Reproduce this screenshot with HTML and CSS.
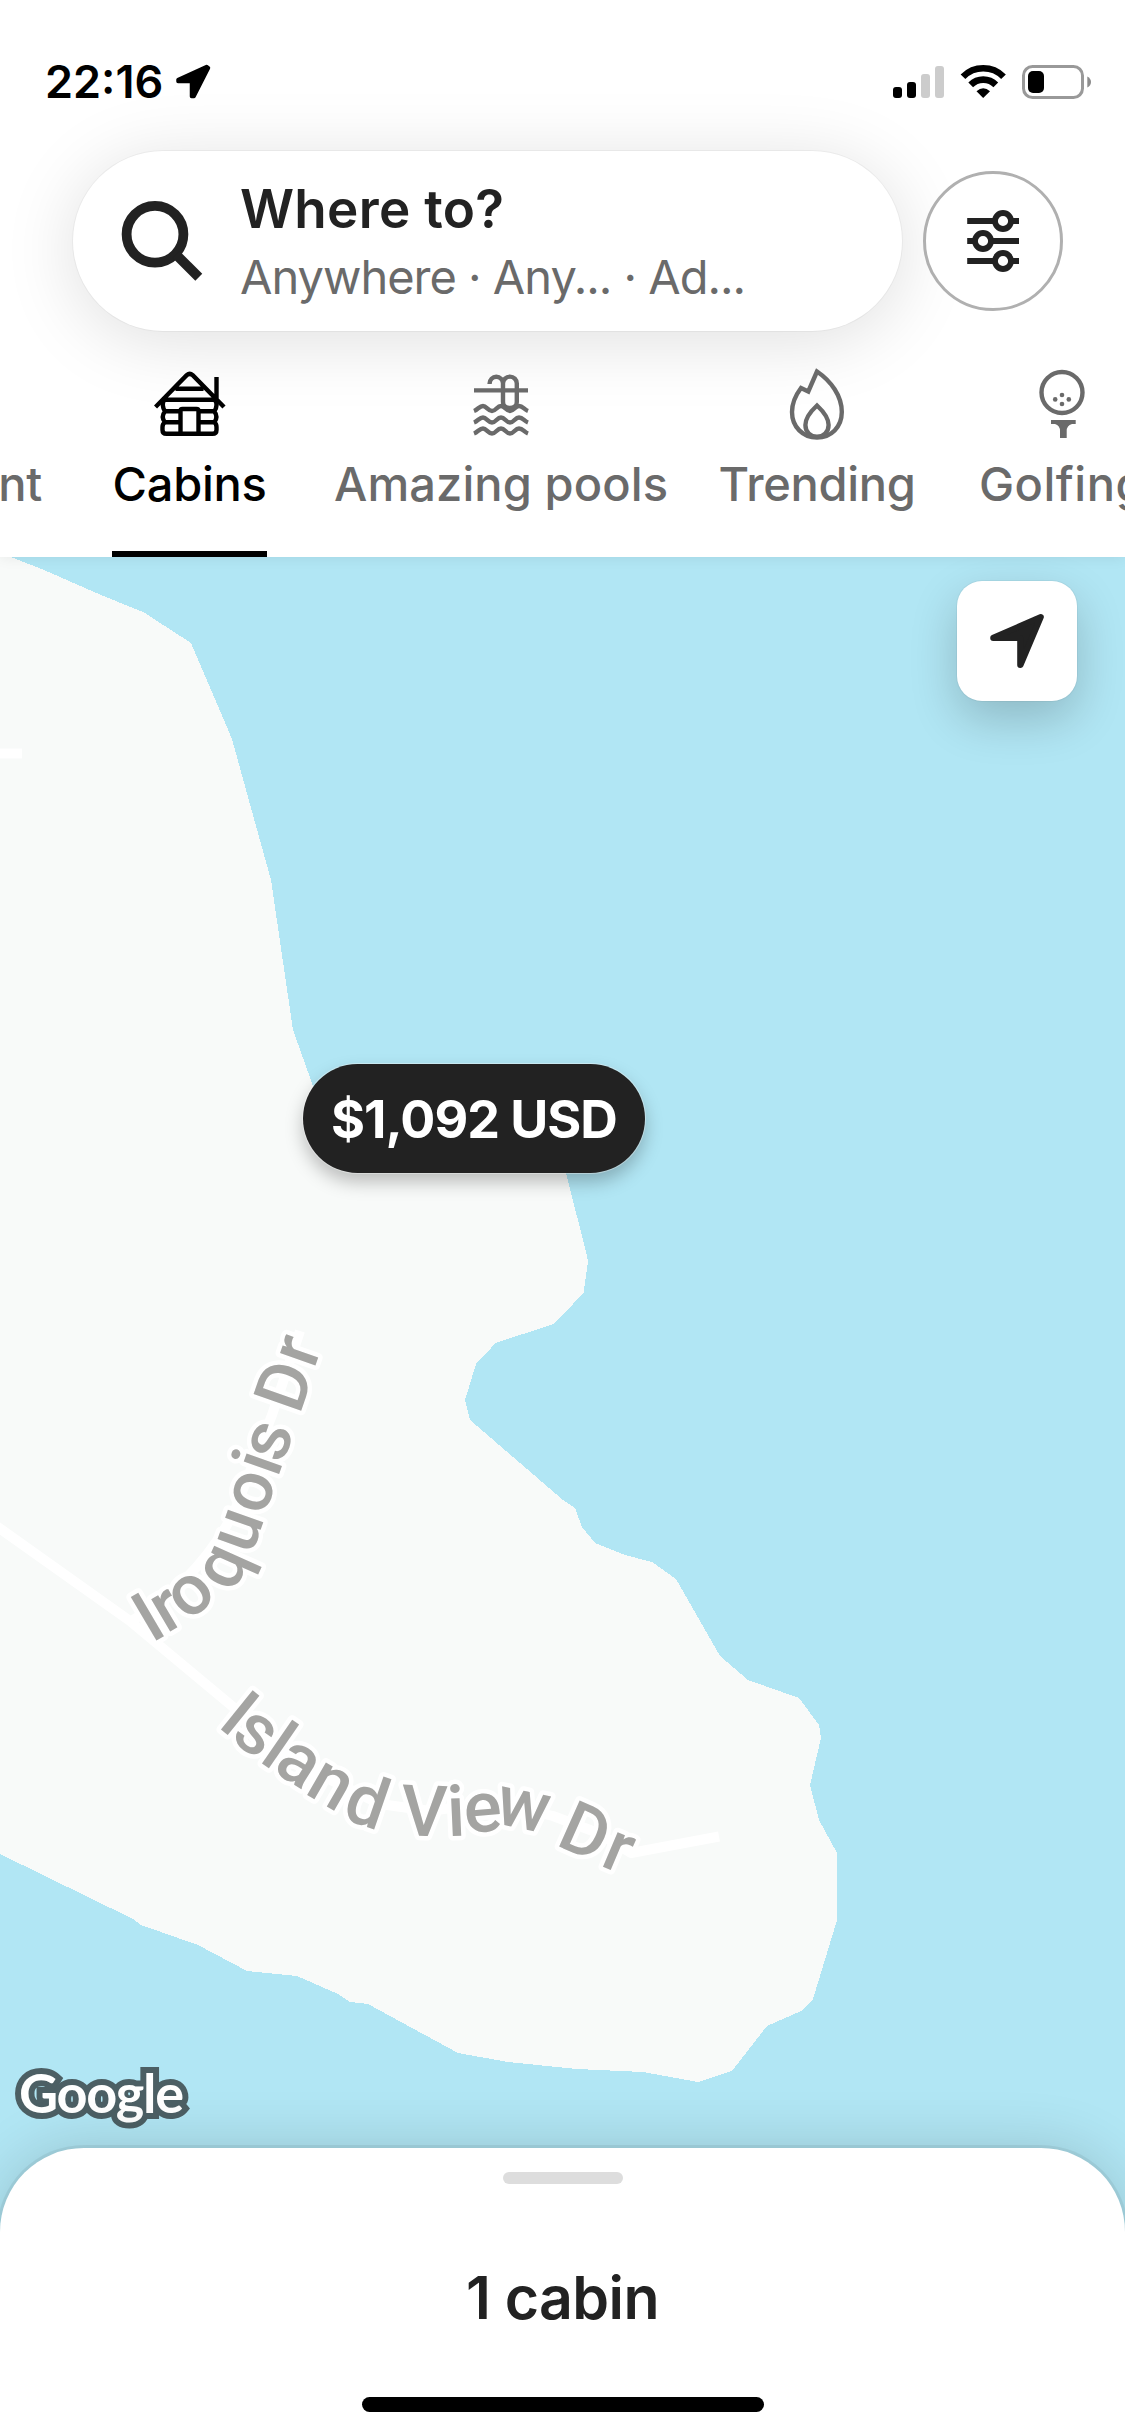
FILE: index.html
```html
<!DOCTYPE html>
<html lang="en">
<head>
<meta charset="utf-8">
<title>Cabins map</title>
<link rel="stylesheet" href="styles.css">
</head>
<body>
<div class="screen">
  <header class="header">
    <div class="status">
      <span class="time">22:16</span>
      <svg class="status-arrow" width="36" height="36" viewBox="0 0 36 36"><path d="M31.500 2.500 3 15.500V17.500H16.500V32.500H19L33.500 4Z" fill="#000" stroke="#000" stroke-width="3.500" stroke-linejoin="round"/></svg>
      <svg class="status-icons" width="200" height="36" viewBox="892 64 200 36">
        <rect x="893" y="87" width="9" height="11" rx="3"/>
        <rect x="907" y="82" width="9" height="16" rx="3"/>
        <rect x="921" y="74" width="9" height="24" rx="3" fill="#ccc"/>
        <rect x="935" y="66" width="9" height="32" rx="3" fill="#ccc"/>
        <g fill="none" stroke="#000" stroke-width="6.600">
          <path d="M963 76.700A28.500 28.500 0 0 1 1003.500 76.700"/>
          <path d="M970.700 84.900A17.500 17.500 0 0 1 995.800 84.900"/>
        </g>
        <path d="M976.500 91.300Q983.200 85 990 91.300L983.200 98Z"/>
        <rect x="1023.500" y="66.500" width="59" height="31" rx="9" fill="none" stroke="#999" stroke-width="3"/>
        <rect x="1028" y="71" width="16" height="22" rx="5"/>
        <path d="M1087.300 76.500Q1091 78.500 1091 82T1087.300 87.500Z" fill="#8c8c8c"/>
      </svg>
    </div>
    <div class="search-row">
      <div class="search">
        <svg width="84" height="84" viewBox="120 199 84 84" fill="none" stroke="#222" stroke-width="9.800"><circle cx="155" cy="234.300" r="28.400"/><path d="M176 254.500 198.800 277.200"/></svg>
        <div class="search-text">
          <div class="search-title">Where to?</div>
          <div class="search-sub">Anywhere · Any... · Ad...</div>
        </div>
      </div>
      <div class="filter">
        <svg width="54" height="64" viewBox="966 209 54 64" fill="none" stroke="#222" stroke-width="5.800">
          <path d="M967.200 221H994M1012 221H1019M967.200 241H974M992 241H1019M967.200 261H994M1012 261H1019"/>
          <circle cx="1003" cy="221" r="8"/><circle cx="983" cy="241" r="8"/><circle cx="1003" cy="261" r="8"/>
        </svg>
      </div>
    </div>
    <nav class="tabs">
      <div class="tab tab-cut"><span class="label">nt</span></div>
      <div class="tab tab-active">
        <svg width="72" height="72" viewBox="153.500 368 72 72" fill="none" stroke="#000" stroke-width="4.400">
          <path d="M155 407 186.200 375.200Q189.200 372.600 192.200 375.200L223.500 407M216 377V399M175 388.700H203M164 399.700H215"/>
          <path d="M163.500 400Q160.500 405 164.500 411.300H180M214.500 400Q218 405 213.800 411.300H198M164.500 411.300Q160 416.800 164.500 422.300H180M213.800 411.300Q218 416.800 213.800 422.300H198M164.500 422.300Q162 424 162 427V430Q162 433.800 166 433.800H212Q216 433.800 216 430V427Q216 424 213.800 422.300"/>
          <path d="M180 433V411Q180 409 182 409H196Q198 409 198 411V433"/>
        </svg>
        <span class="label">Cabins</span>
      </div>
      <div class="tab">
        <svg width="72" height="72" viewBox="465 368 72 72" fill="none" stroke="#6a6a6a" stroke-width="4.400">
          <path d="M474 390.400H528M489.600 384V383.500A6.700 6.700 0 0 1 503 383.500V402Q503 408 509.900 408T516.800 402V383.500A6.900 6.900 0 0 0 503 383.500"/>
          <path d="M474 411C478 409.500 479.500 406 483 406S488 411 492 411 497 406 501 406 506 411 510 411 515 406 519 406 524 409.500 528 411"/>
          <path d="M474 422.500C478 421 479.500 417.500 483 417.500S488 422.500 492 422.500 497 417.500 501 417.500 506 422.500 510 422.500 515 417.500 519 417.500 524 421 528 422.500"/>
          <path d="M474 433.500C478 432 479.500 428.500 483 428.500S488 433.500 492 433.500 497 428.500 501 428.500 506 433.500 510 433.500 515 428.500 519 428.500 524 432 528 433.500"/>
        </svg>
        <span class="label label-pools">Amazing pools</span>
      </div>
      <div class="tab">
        <svg width="72" height="72" viewBox="781 368 72 72" fill="none" stroke="#6a6a6a" stroke-width="4.400">
          <path d="M817 371.500 808.300 391.500 801 388C795 396 792 404 792 412C792 427 803 437.600 817 437.600S841.800 427 841.800 412C841.800 396 831 381 817 371.500Z"/>
          <path d="M817 405.500C810 412 805.400 418 805.400 425C805.400 432 810.500 436.800 817 436.800S828.600 432 828.600 425C828.600 418 824 412 817 405.500Z"/>
        </svg>
        <span class="label">Trending</span>
      </div>
      <div class="tab">
        <svg width="72" height="72" viewBox="1026 368 72 72" fill="#6a6a6a">
          <circle cx="1062" cy="392.500" r="20.500" fill="none" stroke="#6a6a6a" stroke-width="4.400"/>
          <circle cx="1062" cy="395" r="2.300"/><circle cx="1055.200" cy="399.400" r="2.300"/><circle cx="1068.800" cy="399.400" r="2.300"/><circle cx="1062" cy="404" r="2.300"/>
          <path d="M1051 420H1075.700V424H1072Q1066.700 425.500 1066.700 431V438H1060V431Q1060 425.500 1055 424H1051Z"/>
        </svg>
        <span class="label label-golf">Golfing</span>
      </div>
    </nav>
  </header>

  <main class="map">
    <svg class="map-art" width="1125" height="1879" viewBox="0 557 1125 1879">
      <rect y="557" width="1125" height="1879" fill="#b1e6f4"/>
      <path class="land" d="M0 550 11 557 44 570 101 595 144 612.500 191 643 232 739 251 808 271 880 293 1030 313 1086 340 1140 560 1140 566 1173 587 1256 588 1262 583.500 1293 554 1324 496 1342.700 476 1364 465 1400 470 1420 563 1500 575 1508 582 1527 595 1543 625 1555 652 1562 676 1579 720 1656 748 1680 799 1698 819 1725 821 1738 810 1785 819 1820 837 1853V1920L813 1999 801 2011 767 2026 732 2071 698 2082 643 2072 577 2069 508 2062 458 2053 368 2004 350 2002 338 1994 297 1976 247 1971 198 1945 141 1925 133 1919 0 1854Z"/>
      <g class="road">
        <path d="M0 753.500H22"/>
        <path d="M-5 1525 130 1621 154 1641 232 1706 300 1765 380 1804 430 1811 492 1802 553 1816 598 1833 631 1853 719 1836.500"/>
        <path d="M130 1622Q200 1580 235 1510L272 1415 300 1331"/>
      </g>
      <use href="#names" class="halo"/>
      <g id="names" class="road-name">
      <text
        x="151.400 166.500 189 234 251.500 264 277.400 282.400 295 299.600 314.100"
        y="1643.500 1633.800 1622.500 1593.500 1555.500 1517 1478.500 1464.800 1430 1415.400 1369.500"
        rotate="-30.500 -30.500 -42 -66 -70.500 -70.500 -70.500 -70.500 -70.500 -70.700 -70.700">Iroquois Dr</text>
      <text
        x="216.500 229 258 271.500 303.500 340.500 385 400.500 448.100 465.500 493.200 540 554.400 599"
        y="1726 1739 1760.700 1770.500 1793 1818 1832 1835 1836.200 1833.300 1822.700 1835 1844.400 1865"
        rotate="38.900 36 34.600 32 30 19 10 2 -2.600 -5 11.800 20 24 23">Island View Dr</text>
      </g>
      <use href="#logo" class="logo-edge"/>
      <text id="logo" class="google" x="19" y="2112.500" textLength="165">Google</text>
    </svg>
    <div class="locate">
      <svg width="56" height="56" viewBox="989 613 56 56"><path d="M1040.800 617 993.200 637.800V638H1020.200V665H1020.500Z" fill="#222" stroke="#222" stroke-width="6" stroke-linejoin="round"/></svg>
    </div>
    <div class="price">$1,092 USD</div>
  </main>

  <section class="sheet">
    <div class="handle"></div>
    <div class="count">1 cabin</div>
    <div class="home"></div>
  </section>
</div>
</body>
</html>
```
FILE: styles.css
```css
* { box-sizing: border-box; }
body { margin: 0; background: #fff; font-family: Inter, "Liberation Sans", sans-serif; }
svg { display: block; flex: none; }
.screen { width: 1125px; height: 2436px; position: relative; overflow: hidden; display: flex; flex-direction: column; }

.header { height: 557px; flex: none; display: flex; flex-direction: column; background: #fff; position: relative; z-index: 1; box-shadow: 0 0 14px rgba(0,0,0,.08); }
.status { height: 151px; padding: 64px 33px 0 45px; display: flex; align-items: flex-start; }
.time { font-size: 45px; line-height: 36px; font-weight: 600; letter-spacing: 0; width: 130px; }
.status-icons { margin-left: auto; }
.search-row { height: 180px; padding: 0 62px 0 73px; display: flex; align-items: center; justify-content: space-between; }
.search { width: 829px; height: 180px; border-radius: 90px; background: #fff; display: flex; align-items: center; padding-left: 47px; gap: 36px; box-shadow: 0 0 0 1px rgba(0,0,0,.04), 0 9px 72px rgba(0,0,0,.13); }
.search-title { font-size: 53px; line-height: 60px; font-weight: 600; letter-spacing: .3px; color: #222; white-space: nowrap; }
.search-sub { font-size: 47px; line-height: 56px; margin-top: 10px; color: #6a6a6a; letter-spacing: -1px; white-space: nowrap; }
.search-text { padding-top: 1px; }
.filter { width: 140px; height: 140px; border-radius: 50%; border: 3px solid #b0b0b0; background: #fff; display: flex; align-items: center; justify-content: center; }

.tabs { height: 226px; display: grid; grid-template-columns: 78px 223px 400px 232px 258px; overflow: hidden; position: relative; }
.tab { display: flex; flex-direction: column; align-items: center; justify-content: flex-end; color: #6a6a6a; }
.label { height: 112px; padding-top: 9px; margin-top: 5px; font-size: 47px; line-height: 60px; font-weight: 500; white-space: nowrap; letter-spacing: -.3px; text-align: center; }
.label-pools { letter-spacing: .1px; }
.label-golf { letter-spacing: .5px; }
.tab-cut { align-items: flex-end; padding-right: 36px; }
.tab-active { color: #000; }
.tab-active .label { width: 155px; border-bottom: 6px solid #000; }

.map { flex: 1; position: relative; }
.land { fill: #f8faf9; shape-rendering: crispEdges; }
.road { fill: none; stroke: #fff; stroke-width: 10; stroke-linejoin: round; }
.road-name { font: 500 71px Roboto, sans-serif; fill: #a4a4a2; }
.halo { stroke: #fff; stroke-width: 9; stroke-linejoin: round; }
.google { font: 700 54px Lato, sans-serif; fill: #fff; }
.logo-edge { stroke: #4c5f64; stroke-width: 12; }
.locate { position: absolute; left: 957px; top: 24px; width: 120px; height: 120px; border-radius: 25px; background: #fff; display: flex; align-items: center; justify-content: center; box-shadow: 0 0 0 1px rgba(0,0,0,.04), 0 18px 48px rgba(0,0,0,.2); }
.price { position: absolute; left: 303px; top: 507px; width: 342px; height: 109px; border-radius: 55px; background: #222; color: #fff; font-size: 52px; line-height: 111px; font-weight: 700; letter-spacing: -1px; text-align: center; white-space: nowrap; box-shadow: 0 0 0 1px rgba(255,255,255,.35), 0 9px 18px rgba(0,0,0,.25); }

.sheet { position: absolute; left: 0; bottom: 0; z-index: 2; width: 1125px; height: 288px; padding: 24px 0; border-radius: 84px 84px 0 0; background: #fff; display: flex; flex-direction: column; align-items: center; box-shadow: 0 0 0 3px rgba(0,0,0,.06), 0 0 60px rgba(0,0,0,.16); }
.handle { width: 120px; height: 12px; border-radius: 6px; background: #ddd; flex: none; }
.count { margin-top: 79px; font-size: 59px; line-height: 70px; font-weight: 600; letter-spacing: -.6px; color: #222; }
.home { width: 402px; height: 15px; border-radius: 8px; background: #000; margin-top: auto; }
```
